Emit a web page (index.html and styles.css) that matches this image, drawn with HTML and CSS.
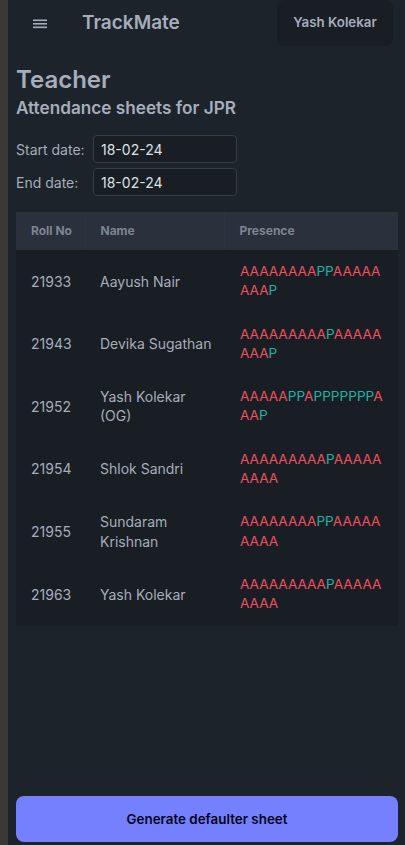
FILE: index.html
```html
<!DOCTYPE html>
<html lang="en">
<head>
<meta charset="utf-8">
<title>TrackMate</title>
<link rel="stylesheet" href="styles.css">
</head>
<body>
<div class="shell">
  <div class="strip"></div>
  <main class="main">
    <header class="navbar">
      <button class="menu-btn" aria-label="menu">
        <svg width="14" height="10" viewBox="0 0 14 10"><rect x="0" y="0.5" width="14" height="1.6" fill="#a6adbb"/><rect x="0" y="4" width="14" height="1.6" fill="#a6adbb"/><rect x="0" y="7.5" width="14" height="1.6" fill="#a6adbb"/></svg>
      </button>
      <div class="brand">TrackMate</div>
      <div class="spacer"></div>
      <button class="user-btn">Yash Kolekar</button>
    </header>

    <h1 class="title">Teacher</h1>
    <h2 class="subtitle">Attendance sheets for JPR</h2>

    <div class="dates">
      <div class="date-row"><label class="date-label">Start date:</label><input class="date-input" type="text" value="18-02-24"></div>
      <div class="date-row"><label class="date-label">End date:</label><input class="date-input" type="text" value="18-02-24"></div>
    </div>

    <table class="sheet">
      <colgroup><col class="c1"><col class="c2"><col class="c3"></colgroup>
      <thead>
        <tr><th>Roll No</th><th>Name</th><th>Presence</th></tr>
      </thead>
      <tbody>
        <tr><td>21933</td><td>Aayush Nair</td><td class="pres"><span class="a">AAAAAAAA</span><span class="p">PP</span><span class="a">AAAAAAAA</span><span class="p">P</span></td></tr>
        <tr><td>21943</td><td>Devika Sugathan</td><td class="pres"><span class="a">AAAAAAAAA</span><span class="p">P</span><span class="a">AAAAAAAA</span><span class="p">P</span></td></tr>
        <tr><td>21952</td><td>Yash Kolekar (OG)</td><td class="pres"><span class="a">AAAAA</span><span class="p">PP</span><span class="a">A</span><span class="p">PPPPPPP</span><span class="a">AAA</span><span class="p">P</span></td></tr>
        <tr><td>21954</td><td>Shlok Sandri</td><td class="pres"><span class="a">AAAAAAAAA</span><span class="p">P</span><span class="a">AAAAAAAAA</span></td></tr>
        <tr><td>21955</td><td>Sundaram Krishnan</td><td class="pres"><span class="a">AAAAAAAA</span><span class="p">PP</span><span class="a">AAAAAAAAA</span></td></tr>
        <tr><td>21963</td><td>Yash Kolekar</td><td class="pres"><span class="a">AAAAAAAAA</span><span class="p">P</span><span class="a">AAAAAAAAA</span></td></tr>
      </tbody>
    </table>

    <button class="generate">Generate defaulter sheet</button>
  </main>
</div>
</body>
</html>
```

FILE: styles.css
```css
* { box-sizing: border-box; }
html, body {
  margin: 0;
  padding: 0;
  background: #1d232a;
  font-family: Inter, "Noto Sans", sans-serif;
  color: #a6adbb;
}
.shell {
  display: flex;
  min-height: 845px;
}
.strip {
  width: 8px;
  flex: 0 0 8px;
  background: #3a3937;
}
.main {
  flex: 1;
  min-width: 0;
  display: flex;
  flex-direction: column;
  padding: 0 7px 3px 8px;
}
.navbar {
  display: flex;
  align-items: center;
  height: 46px;
}
.menu-btn {
  width: 48px;
  height: 46px;
  background: transparent;
  border: 0;
  padding: 0;
  display: flex;
  align-items: center;
  justify-content: center;
}
.menu-btn svg { display: block; margin-top: 1px; }
.brand {
  margin-left: 18px;
  font-size: 19px;
  font-weight: 600;
  color: #a6adbb;
  line-height: 28px;
}
.spacer { flex: 1; }
.user-btn {
  width: 116px;
  height: 46px;
  margin-right: 5px;
  background: #191e24;
  border: 0;
  border-radius: 8px;
  color: #a6adbb;
  font-family: Inter, sans-serif;
  font-size: 13.3px;
  font-weight: 600;
  padding: 0 0 2px;
}
.title {
  margin: 18px 0 0;
  font-size: 24px;
  line-height: 32px;
  font-weight: 600;
  color: #a6adbb;
}
.subtitle {
  margin: 0;
  font-size: 17.2px;
  line-height: 24px;
  font-weight: 600;
  color: #a6adbb;
}
.dates {
  margin: 15px 0 0;
  display: flex;
  flex-direction: column;
  gap: 5px;
}
.date-row {
  display: flex;
  align-items: center;
}
.date-label {
  width: 77px;
  font-size: 14px;
  color: #a6adbb;
}
.date-input {
  width: 144px;
  height: 28px;
  background: #191e24;
  border: 1px solid #373d46;
  border-radius: 4px;
  color: #dde1e6;
  font-family: Inter, sans-serif;
  font-size: 14px;
  padding: 0 7px;
  outline: none;
}
.sheet {
  margin: 16px 0 0;
  width: 382px;
  border-collapse: collapse;
  table-layout: fixed;
  font-size: 14px;
}
.c1 { width: 69px; }
.c2 { width: 139px; }
.c3 { width: 174px; }
.sheet thead tr { background: #2a303c; }
.sheet th {
  text-align: left;
  font-size: 12px;
  font-weight: 700;
  line-height: 14px;
  color: #7d8591;
  padding: 12px 2px 12px 15px;
  white-space: nowrap;
}
.sheet th + th { border-left: 1px solid #2d3440; }
.sheet tbody tr { background: #191e24; }
.sheet td {
  padding: 12px 8px 12px 15px;
  line-height: 19.3px;
  color: #a6adbb;
  vertical-align: middle;
}
.sheet td.pres {
  padding-left: 16px;
  padding-right: 13px;
  font-size: 13.6px;
  word-break: break-all;
}
.a { color: #f0505e; }
.p { color: #1fb2a5; }
.generate {
  margin: auto 0 0;
  width: 382px;
  height: 46px;
  background: #7480ff;
  border: 0;
  border-radius: 8px;
  color: #050617;
  font-family: Inter, sans-serif;
  font-size: 13.4px;
  font-weight: 600;
}
```
